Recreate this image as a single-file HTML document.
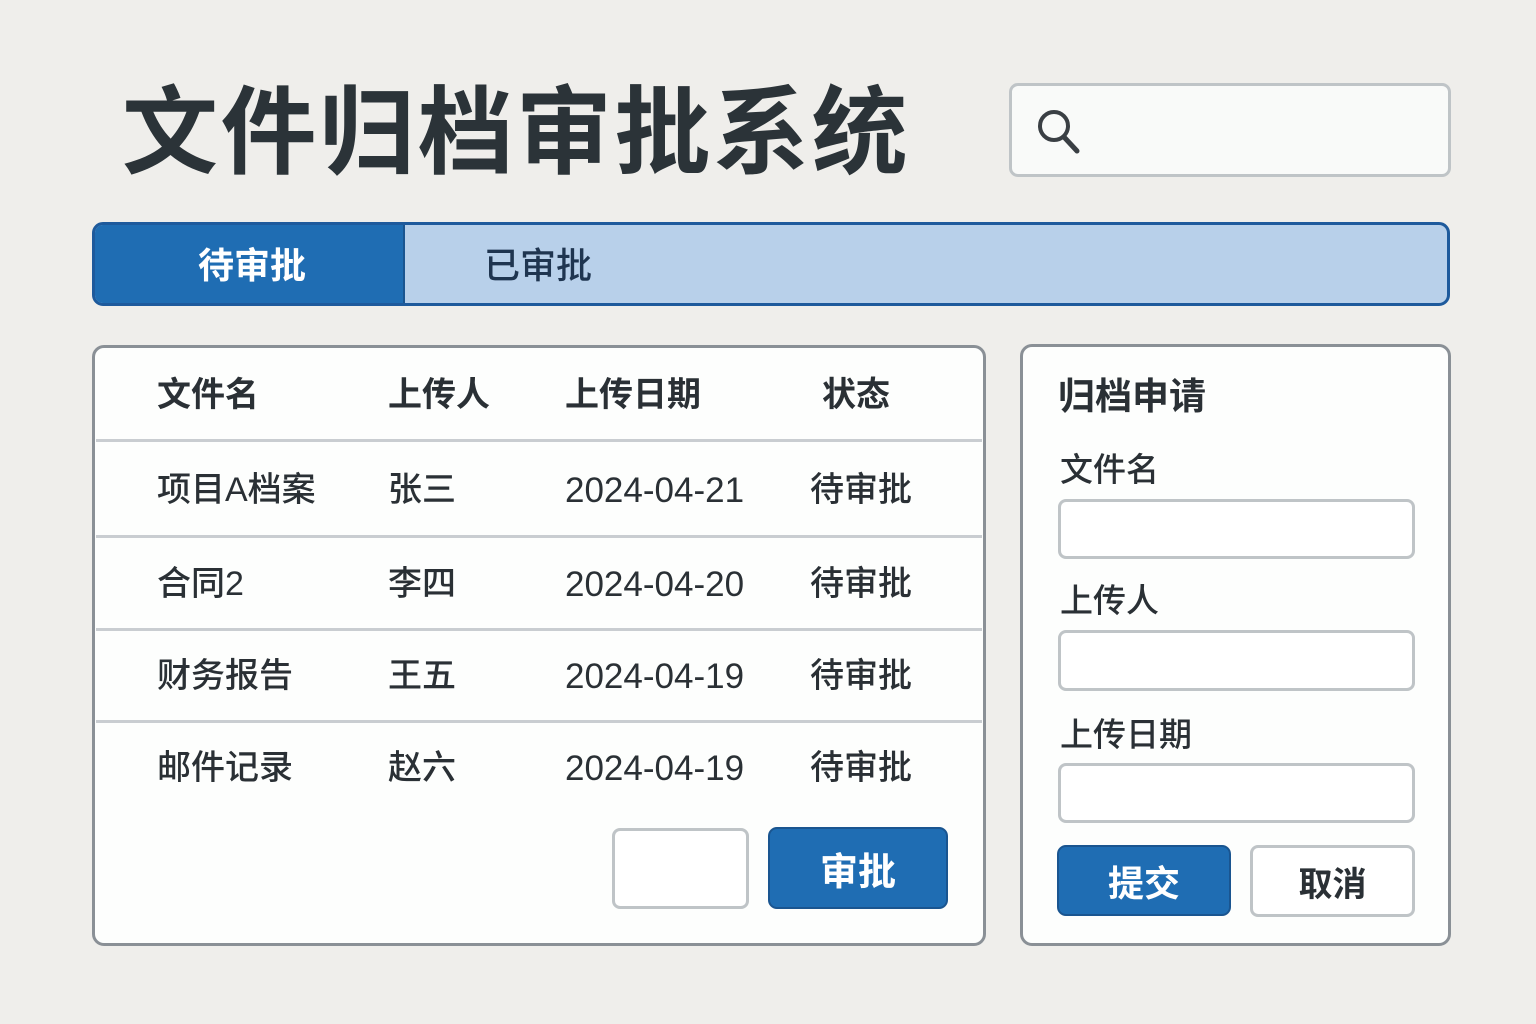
<!DOCTYPE html>
<html><head><meta charset="utf-8"><style>
body{margin:0;width:1536px;height:1024px;background:#efeeeb;font-family:"Liberation Sans","Noto Sans CJK SC",sans-serif;position:relative;overflow:hidden;color:#2a3035}
.a{position:absolute}
.t{position:absolute;white-space:nowrap;line-height:1}
.panel{position:absolute;background:#fdfefd;border:3px solid #8a9096;border-radius:12px;box-sizing:border-box}
.inp{position:absolute;background:#fff;border:3px solid #bfc4c7;border-radius:8px;box-sizing:border-box}
.btn{position:absolute;background:#1f6db3;border:2px solid #1a5590;border-radius:9px;box-sizing:border-box;color:#fff;font-weight:bold;display:flex;align-items:center;justify-content:center}
.line{position:absolute;left:96px;width:886px;height:3px;background:#c9cdd1}
.c{font-size:34px;color:#2a3035;font-weight:500}
.d{font-size:35px;color:#2a3035}
</style></head><body>
<div class="t" style="left:122px;top:86px;font-size:96px;font-weight:bold;color:#2b3338;letter-spacing:2.5px">文件归档审批系统</div>
<div class="inp" style="left:1009px;top:83px;width:442px;height:94px;border-radius:9px;background:#f9faf9"></div>
<svg class="a" style="left:1030px;top:102px" width="56" height="56" viewBox="0 0 56 56"><circle cx="24" cy="24" r="14" fill="none" stroke="#3a3f44" stroke-width="4"/><line x1="34" y1="35" x2="47" y2="49" stroke="#3a3f44" stroke-width="5" stroke-linecap="round"/></svg>

<div class="a" style="left:92px;top:222px;width:1358px;height:84px;border:3px solid #1e5a9c;border-radius:11px;box-sizing:border-box;background:#b8d0ea;overflow:hidden">
<div class="a" style="left:0;top:0;width:308px;height:78px;background:#1f6db3;border-right:2px solid #1a5590"></div>
</div>
<div class="t" style="left:198px;top:248px;font-size:36px;font-weight:bold;color:#fff">待审批</div>
<div class="t" style="left:484px;top:248px;font-size:36px;color:#1f3550;font-weight:500">已审批</div>

<div class="panel" style="left:92px;top:345px;width:894px;height:601px"></div>
<div class="t c" style="left:157px;top:378px;font-weight:bold">文件名</div>
<div class="t c" style="left:388px;top:378px;font-weight:bold">上传人</div>
<div class="t c" style="left:565px;top:378px;font-weight:bold">上传日期</div>
<div class="t c" style="left:822px;top:378px;font-weight:bold">状态</div>
<div class="line" style="top:439px"></div>
<div class="line" style="top:535px"></div>
<div class="line" style="top:628px"></div>
<div class="line" style="top:720px"></div>

<div class="t c" style="left:157px;top:473px">项目A档案</div><div class="t c" style="left:388px;top:473px">张三</div><div class="t d" style="left:565px;top:473px">2024-04-21</div><div class="t c" style="left:810px;top:473px">待审批</div>
<div class="t c" style="left:157px;top:567px">合同2</div><div class="t c" style="left:388px;top:567px">李四</div><div class="t d" style="left:565px;top:567px">2024-04-20</div><div class="t c" style="left:810px;top:567px">待审批</div>
<div class="t c" style="left:157px;top:659px">财务报告</div><div class="t c" style="left:388px;top:659px">王五</div><div class="t d" style="left:565px;top:659px">2024-04-19</div><div class="t c" style="left:810px;top:659px">待审批</div>
<div class="t c" style="left:157px;top:751px">邮件记录</div><div class="t c" style="left:388px;top:751px">赵六</div><div class="t d" style="left:565px;top:751px">2024-04-19</div><div class="t c" style="left:810px;top:751px">待审批</div>

<div class="inp" style="left:612px;top:828px;width:137px;height:81px"></div>
<div class="btn" style="left:768px;top:827px;width:180px;height:82px;font-size:38px">审批</div>

<div class="panel" style="left:1020px;top:344px;width:431px;height:602px"></div>
<div class="t" style="left:1058px;top:378px;font-size:37px;font-weight:bold;color:#2a3035">归档申请</div>
<div class="t c" style="left:1060px;top:453px;font-size:33px">文件名</div>
<div class="inp" style="left:1058px;top:499px;width:357px;height:60px"></div>
<div class="t c" style="left:1060px;top:584px;font-size:33px">上传人</div>
<div class="inp" style="left:1058px;top:630px;width:357px;height:61px"></div>
<div class="t c" style="left:1060px;top:718px;font-size:33px">上传日期</div>
<div class="inp" style="left:1058px;top:763px;width:357px;height:60px"></div>
<div class="btn" style="left:1057px;top:845px;width:174px;height:71px;font-size:36px">提交</div>
<div class="inp" style="left:1250px;top:845px;width:165px;height:72px;display:flex;align-items:center;justify-content:center;font-size:34px;font-weight:bold;color:#2a3035">取消</div>
</body></html>
